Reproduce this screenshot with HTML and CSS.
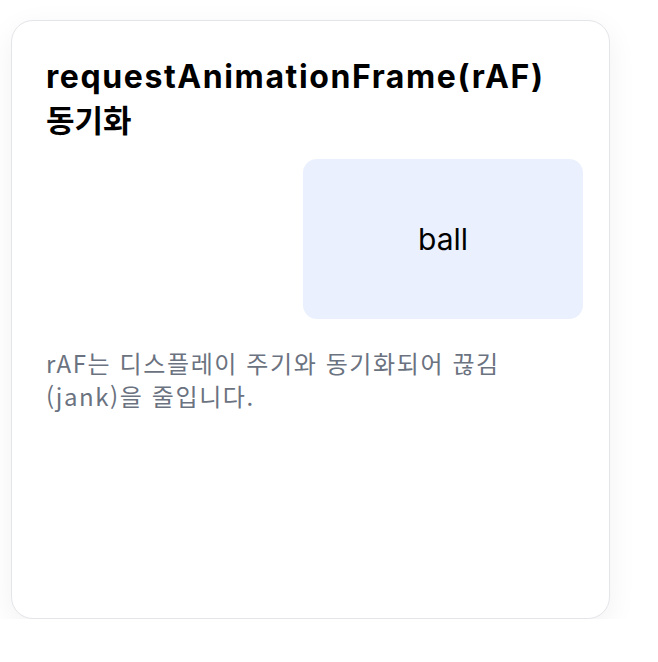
FILE: index.html
```html
<!DOCTYPE html>
<html lang="ko">
<head>
<meta charset="utf-8">
<link rel="stylesheet" href="styles.css">
</head>
<body>
<div class="card">
  <h2 class="title">requestAnimationFrame(rAF) <span class="title-ko">동기화</span></h2>
  <div class="stage">
    <div class="ball">ball</div>
  </div>
  <p class="desc">rAF는 디스플레이 주기와 동기화되어 끊김 (jank)을 줄입니다.</p>
</div>
</body>
</html>
```
FILE: styles.css
```css
html, body {
  margin: 0;
  padding: 0;
  background: #ffffff;
}
body {
  padding: 20px 0 0 11px;
  font-family: "Inter", "Noto Sans CJK KR", sans-serif;
}
.card {
  box-sizing: border-box;
  width: 599px;
  height: 599px;
  border: 1px solid #e4e5e9;
  border-radius: 22px;
  background: #fff;
  padding: 35px 34px 33px;
  box-shadow: 0 8px 30px rgba(0, 0, 0, 0.06);
}
.title {
  margin: 0;
  font-family: "Inter", "Noto Sans CJK KR", sans-serif;
  font-size: 32px;
  line-height: 42px;
  font-weight: 700;
  color: #000;
  letter-spacing: 1.6px;
}
.title-ko {
  font-family: "Noto Sans CJK KR", sans-serif;
  font-size: 31px;
  letter-spacing: 0;
}
.stage {
  margin-top: 17px;
  display: flex;
}
.ball {
  margin-left: 257px;
  flex: 0 0 280px;
  height: 160px;
  border-radius: 14px;
  background: #ebf0fe;
  display: flex;
  align-items: center;
  justify-content: center;
  font-family: "Inter", sans-serif;
  font-size: 30px;
  color: #000;
}
.desc {
  margin: 27px 0 0;
  font-family: "Noto Sans CJK KR", sans-serif;
  font-size: 24px;
  line-height: 33px;
  letter-spacing: 1.6px;
  color: #6b7280;
}
```
